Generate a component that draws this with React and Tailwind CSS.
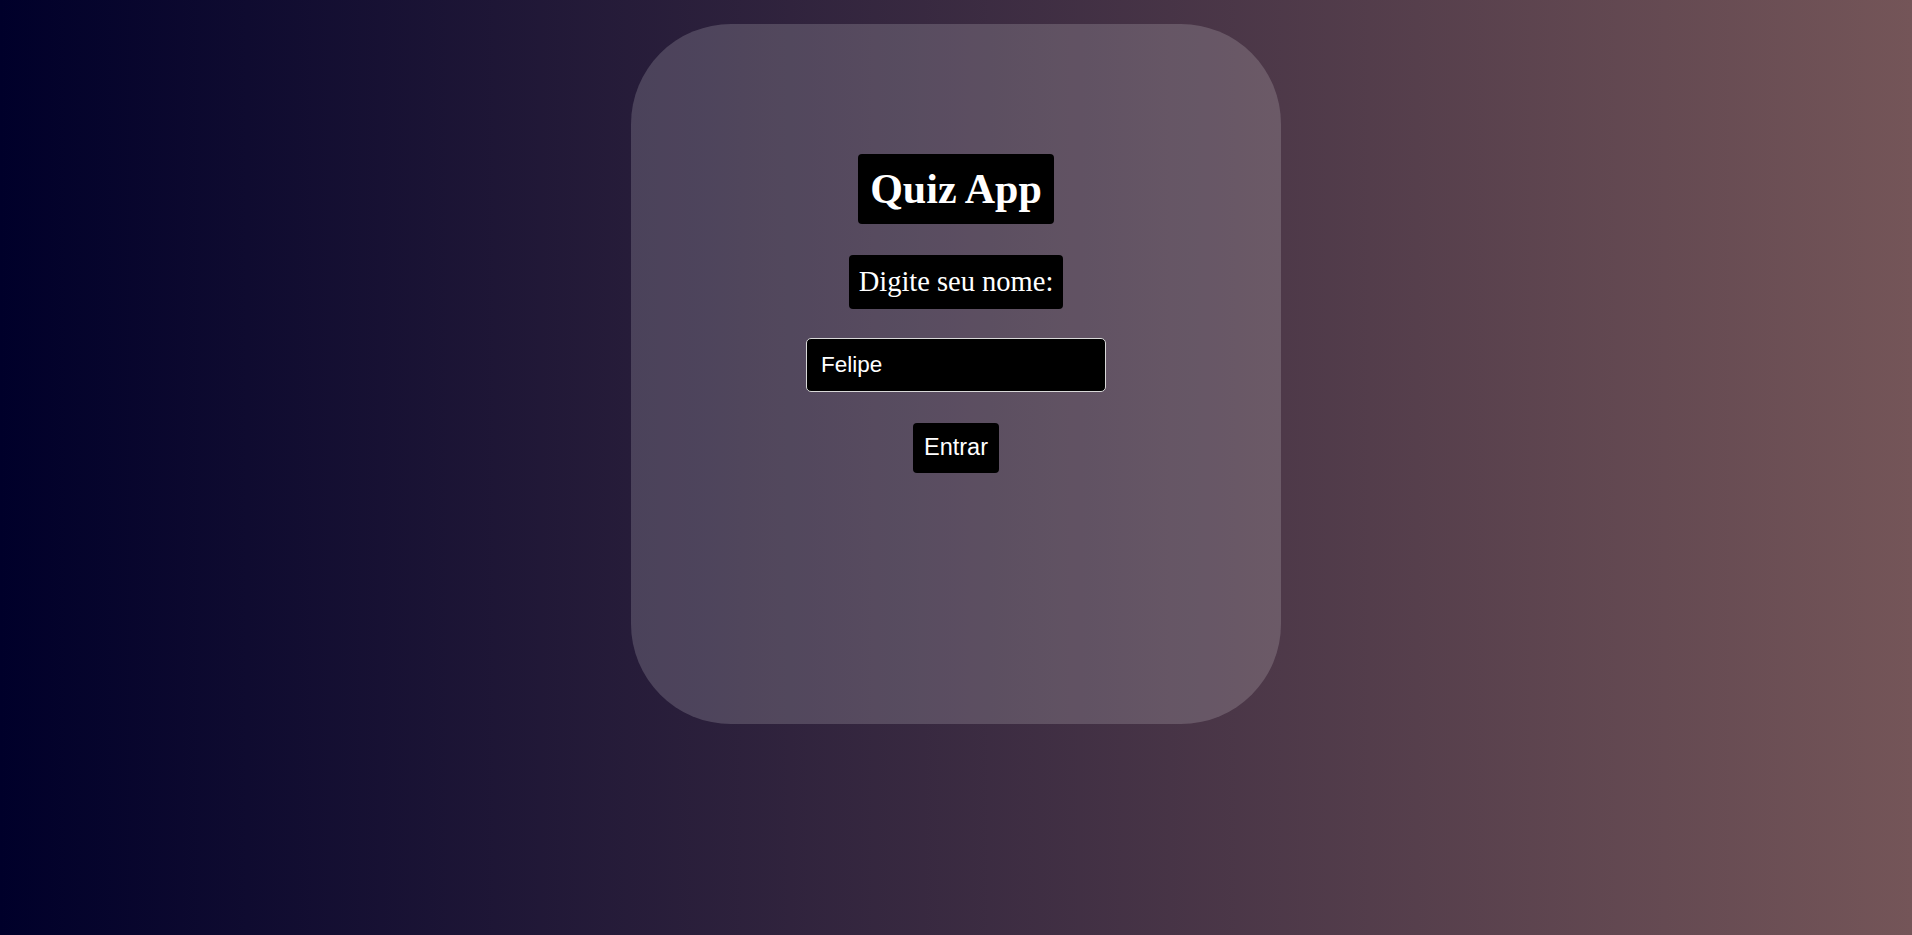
import React, { useState } from "react";

const App = () => {
  const [name, setName] = useState("Felipe");

  return (
    <div className="min-h-[935px] w-full bg-[linear-gradient(to_right,#00002a,#745558)] flex justify-center">
      {/* Card */}
      <div className="mt-[24px] w-[650px] h-[700px] rounded-[100px] bg-[rgba(255,255,255,0.17)] flex flex-col items-center pt-[130px]">
        <h1 className="h-[70px] px-[12px] flex items-center bg-black text-white rounded-[4px] font-['Liberation_Serif',serif] font-bold text-[42px] leading-none">
          Quiz App
        </h1>

        <label
          htmlFor="nome"
          className="mt-[31px] h-[54px] px-[10px] flex items-center bg-black text-white rounded-[4px] font-['Liberation_Serif',serif] text-[28.5px] leading-none"
        >
          Digite seu nome:
        </label>

        <input
          id="nome"
          type="text"
          autoFocus
          value={name}
          onChange={(e) => setName(e.target.value)}
          className="mt-[29px] w-[300px] h-[54px] px-[14px] bg-black text-white border border-[#d8d8d8] rounded-[5px] outline-none font-['Liberation_Sans',Arial,sans-serif] text-[22.5px] caret-white"
        />

        <button className="mt-[31px] h-[50px] px-[11px] bg-black text-white rounded-[4px] font-['Liberation_Sans',Arial,sans-serif] text-[23.5px] leading-none">
          Entrar
        </button>
      </div>
    </div>
  );
};

export default App;
